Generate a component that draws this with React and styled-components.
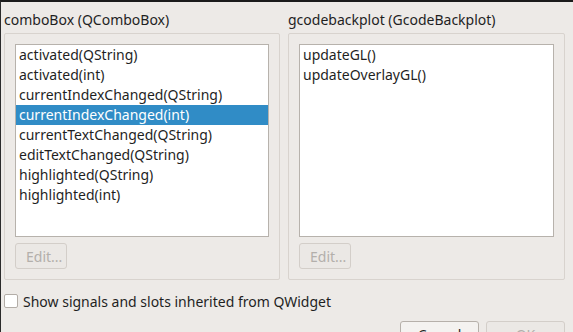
import React from "react";
import styled, { createGlobalStyle } from "styled-components";

const GlobalStyle = createGlobalStyle`
  body {
    margin: 0;
    background: #edeae7;
    font-family: "Noto Sans", "DejaVu Sans", sans-serif;
  }
`;

const Window = styled.div`
  width: 573px;
  height: 332px;
  box-sizing: border-box;
  overflow: hidden;
  background: #edeae7;
  border-top: 2px solid #1b1b1b;
  border-left: 1px solid #2b2b2b;
  padding: 0 8px 0 3px;
  color: #1f1f1f;
  font-size: 14px;
`;

const Columns = styled.div`
  display: grid;
  grid-template-columns: 276px 277px;
  column-gap: 8px;
`;

const Group = styled.section`
  display: flex;
  flex-direction: column;
`;

const GroupTitle = styled.div`
  height: 20px;
  line-height: 20px;
  margin-top: 8px;
  margin-bottom: 3px;
  padding-left: ${(p) => p.$indent || 0}px;
`;

const Frame = styled.div`
  height: 247px;
  box-sizing: border-box;
  border: 1px solid #d8d3ce;
  border-radius: 2px;
  padding: 10px;
  display: flex;
  flex-direction: column;
  gap: 6px;
`;

const List = styled.ul`
  list-style: none;
  margin: 0;
  height: 193px;
  box-sizing: border-box;
  padding: 0;
  background: #fff;
  border: 1px solid #b7b2ac;
`;

const Item = styled.li`
  height: 20px;
  line-height: 20px;
  padding-left: 3px;
  white-space: nowrap;
  background: ${(p) => (p.$selected ? "#308cc6" : "transparent")};
  color: ${(p) => (p.$selected ? "#fff" : "#1f1f1f")};
`;

const Button = styled.button`
  font: inherit;
  height: 26px;
  box-sizing: border-box;
  padding: 0 10px;
  border-radius: 3px;
  background: ${(p) => (p.disabled ? "#ebe8e5" : "#f4f2f0")};
  border: 1px solid ${(p) => (p.disabled ? "#d3cec9" : "#b6b0aa")};
  color: ${(p) => (p.disabled ? "#b3afab" : "#1f1f1f")};
  width: ${(p) => p.$width}px;
`;

const CheckRow = styled.label`
  display: flex;
  align-items: center;
  gap: 5px;
  margin-top: 13px;
  height: 16px;
`;

const CheckBox = styled.span`
  width: 14px;
  height: 14px;
  box-sizing: border-box;
  background: #fff;
  border: 1px solid #b3ada7;
  border-radius: 2px;
`;

const ButtonRow = styled.div`
  display: flex;
  justify-content: flex-end;
  gap: 7px;
  margin-top: 12px;
`;

const signals = [
  "activated(QString)",
  "activated(int)",
  "currentIndexChanged(QString)",
  "currentIndexChanged(int)",
  "currentTextChanged(QString)",
  "editTextChanged(QString)",
  "highlighted(QString)",
  "highlighted(int)",
];

const slots = ["updateGL()", "updateOverlayGL()"];

export default function App() {
  return (
    <>
      <GlobalStyle />
      <Window>
        <Columns>
          <Group>
            <GroupTitle>comboBox (QComboBox)</GroupTitle>
            <Frame>
              <List>
                {signals.map((s, i) => (
                  <Item key={s} $selected={i === 3}>
                    {s}
                  </Item>
                ))}
              </List>
              <Button disabled $width={52}>Edit...</Button>
            </Frame>
          </Group>
          <Group>
            <GroupTitle>gcodebackplot (GcodeBackplot)</GroupTitle>
            <Frame>
              <List>
                {slots.map((s) => (
                  <Item key={s}>{s}</Item>
                ))}
              </List>
              <Button disabled $width={52}>Edit...</Button>
            </Frame>
          </Group>
        </Columns>
        <CheckRow>
          <CheckBox />
          Show signals and slots inherited from QWidget
        </CheckRow>
        <ButtonRow>
          <Button $width={79}>Cancel</Button>
          <Button disabled $width={79}>OK</Button>
        </ButtonRow>
      </Window>
    </>
  );
}
